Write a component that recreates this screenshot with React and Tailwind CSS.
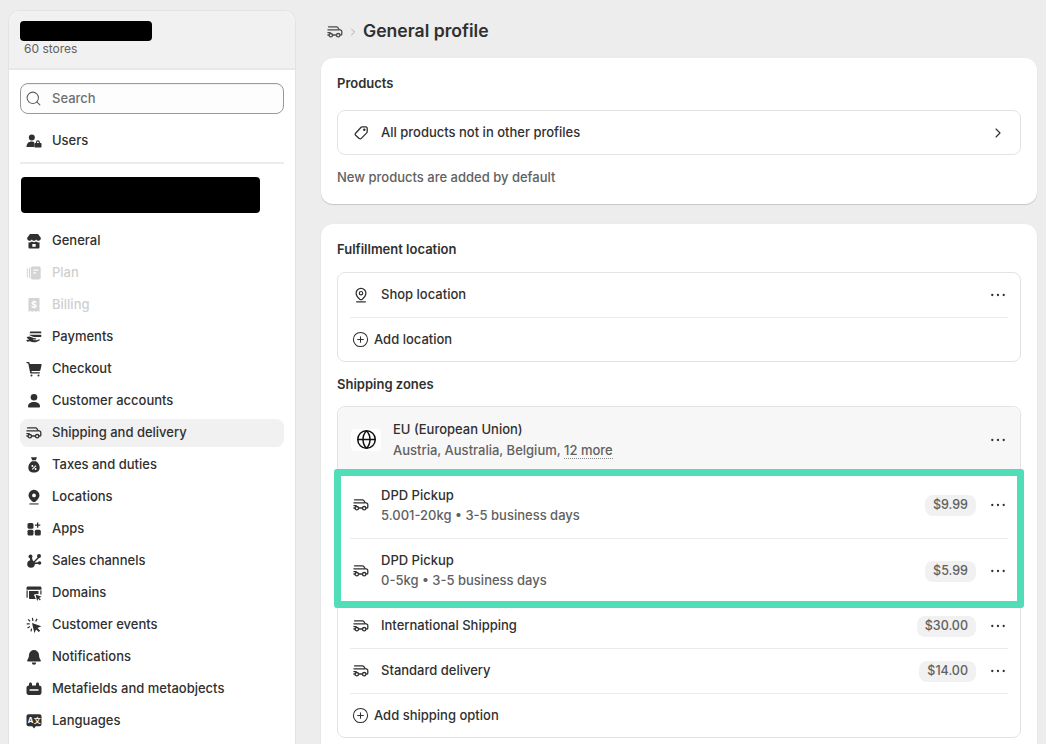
import React from "react";
import { ChevronRight, CirclePlus, Globe, Search } from "lucide-react";

const Truck = ({ className = "" }) => (
  <svg viewBox="0 0 16 16" width="16" height="16" fill="none" stroke="currentColor" strokeWidth="1.3" strokeLinecap="round" strokeLinejoin="round" className={className}>
    <path d="M1.5 2.800h8c.5 0 .9.200 1.200.6l1.400 2.100 1.700.6c.6.200 1 .7 1 1.300v2.800c0 .5-.3.800-.8.800h-.5" />
    <path d="M.9 5.800h11" />
    <path d="M.9 8.600h2.300M.9 11h.8M5.800 11h3" />
    <circle cx="3.800" cy="11.200" r="1.700" />
    <circle cx="11.200" cy="11.200" r="1.700" />
  </svg>
);

const Dots = ({ className = "" }) => (
  <svg viewBox="0 0 20 20" width="20" height="20" fill="#303030" className={`shrink-0 ${className}`}>
    <circle cx="4.300" cy="10" r="1.150" />
    <circle cx="10" cy="10" r="1.150" />
    <circle cx="15.700" cy="10" r="1.150" />
  </svg>
);

const Pin = () => (
  <svg viewBox="0 0 16 16" width="16" height="16" fill="none" stroke="#303030" strokeWidth="1.200" strokeLinecap="round" className="shrink-0">
    <path d="M8 1.300a4.900 4.900 0 0 1 4.900 4.900c0 2.300-1.600 4.200-3.600 6-.8.600-1.800.600-2.600 0-2-1.800-3.600-3.700-3.600-6A4.900 4.900 0 0 1 8 1.300Z" />
    <circle cx="8" cy="6.200" r="1.700" />
    <path d="M3.600 14.800h8.800" />
  </svg>
);

const TagIcon = () => (
  <svg viewBox="0 0 16 16" width="16" height="16" fill="none" stroke="#303030" strokeWidth="1.300" strokeLinejoin="round" className="shrink-0">
    <path d="M9.200 1.800h3.500c.8 0 1.500.7 1.500 1.500v3.500c0 .4-.2.800-.5 1.100l-5.400 5.500c-.6.600-1.500.6-2.100 0L2.600 10.300c-.6-.6-.6-1.500 0-2.100L8.100 2.300c.3-.3.700-.5 1.100-.5Z" />
    <circle cx="11.300" cy="4.700" r=".6" fill="#303030" />
  </svg>
);

const Fill = ({ children, color }) => (
  <svg viewBox="0 0 16 16" width="16" height="16" fill={color} className="shrink-0">{children}</svg>
);

const icons = {
  users: (c) => (
    <Fill color={c}>
      <circle cx="5.800" cy="4.600" r="3" />
      <path d="M.5 14c0-3.200 2-5.400 5.300-5.400 1 0 1.900.2 2.600.6-.3.500-.4 1-.4 1.600V14Z" />
      <path fillRule="evenodd" d="M9 10h.9V9.300a2 2 0 0 1 4 0V10h.9c.3 0 .7.300.7.700v3c0 .4-.4.700-.7.700H9c-.3 0-.7-.3-.7-.7v-3c0-.4.400-.7.700-.7Zm2-.1h1.800v-.6a.9.900 0 0 0-1.800 0Z" />
    </Fill>
  ),
  general: (c) => (
    <Fill color={c}>
      <path d="M4 1h8l2.800 3.800c.3 1.700-.9 3-2.300 3-1 0-1.800-.5-2.300-1.300-.5.800-1.300 1.300-2.200 1.300s-1.700-.5-2.200-1.300c-.5.800-1.300 1.300-2.300 1.300-1.400 0-2.600-1.300-2.300-3Z" />
      <path fillRule="evenodd" d="M2.500 9.200c1.200.4 2.500.2 3.500-.6 1.200.8 2.800.8 4 0 1 .8 2.300 1 3.500.6v5.300c0 .6-.5 1-1 1h-9c-.5 0-1-.4-1-1Zm3.800 1.800v2.800h3.400V11Z" />
    </Fill>
  ),
  plan: (c) => (
    <Fill color={c}>
      <path d="M.8 3.500h1v9h-1zM3 3h1v10H3z" />
      <path fillRule="evenodd" d="M6.500 1.500h6.500c1 0 1.700.7 1.700 1.700v9.600c0 1-.7 1.700-1.700 1.700H6.500c-1 0-1.700-.7-1.700-1.700V3.200c0-1 .7-1.700 1.700-1.700Zm.8 3v1.300h5V4.500Zm0 2.700v1.200h2.800V7.200Z" />
    </Fill>
  ),
  billing: (c) => (
    <Fill color={c}>
      <path d="M3.500 1h9c.6 0 1 .4 1 1v13l-2-1.300-1.700 1.300L8 13.700 6.200 15l-1.700-1.300-2 1.300V2c0-.6.400-1 1-1Z" />
      <text x="8" y="10.500" fontSize="9" fontWeight="700" textAnchor="middle" fill="#fff" fontFamily="Inter, sans-serif">$</text>
    </Fill>
  ),
  payments: (c) => (
    <Fill color={c}>
      <path d="M4.500 2.500h10.300c.3 0 .5.200.5.500v1.300H3.700L4 3c.1-.3.200-.5.500-.5ZM3 5.700h12.300v1.900c0 .3-.2.500-.5.500H9.500c-1.800 0-3-.5-4.200-1.100C4.500 6.600 3.800 6.200 3 5.700Z" />
      <path d="M.6 8.300c1.800-1.300 3.400-.8 5 0 1 .5 2.300.9 4 1 .8 0 .8 1.200 0 1.200H7v.6l3.200.1 3.200-1 .5 1.100-3.600 1.700c-2 .7-4.600.3-6.500-.7l-2.600.5-1-1.800 3-.6c-.9-.3-1.800-.9-2.600-2.100Z" />
    </Fill>
  ),
  checkout: (c) => (
    <Fill color={c}>
      <path d="M.5 1h2.200c.4 0 .8.300.9.700L3.800 3h11c.5 0 .9.500.8 1l-1.200 5.200c-.1.500-.5.800-1 .8H5.500l.2 1.200h8.100v1.300H5c-.4 0-.7-.3-.8-.6L2.200 2.300H.5Z" />
      <circle cx="5.500" cy="14.500" r="1" />
      <circle cx="12.500" cy="14.500" r="1" />
    </Fill>
  ),
  customer: (c) => (
    <Fill color={c}>
      <circle cx="8" cy="4.300" r="3.300" />
      <path d="M2 13.500c0-2.800 2.300-4.500 6-4.500s6 1.700 6 4.500c0 .6-.4 1-1 1H3c-.6 0-1-.4-1-1Z" />
    </Fill>
  ),
  taxes: (c) => (
    <Fill color={c}>
      <path d="M5 .3h6L9.800 3.300H6.200Z" />
      <path fillRule="evenodd" d="M6 4.300h4c2.300 1.600 3.700 3.800 3.700 6.200 0 3-2 5-5.700 5s-5.700-2-5.700-5c0-2.400 1.400-4.600 3.700-6.200Zm3.700 3.900L5.800 12l.8.800 3.900-3.800ZM6.400 8a1 1 0 1 0 0 2 1 1 0 0 0 0-2Zm3.200 3a1 1 0 1 0 0 2 1 1 0 0 0 0-2Z" />
    </Fill>
  ),
  locations: (c) => (
    <Fill color={c}>
      <path fillRule="evenodd" d="M8 .8a5.500 5.500 0 0 1 5.500 5.500c0 2.400-1.700 4.400-3.800 6.200-1 .8-2.400.8-3.400 0C4.200 10.700 2.500 8.700 2.500 6.300A5.500 5.500 0 0 1 8 .8Zm0 3.700a1.900 1.900 0 1 0 0 3.800 1.900 1.900 0 0 0 0-3.800Z" />
      <path d="M3.500 14.400h9v1.100h-9z" />
    </Fill>
  ),
  apps: (c) => (
    <Fill color={c}>
      <rect x="1.500" y="2" width="6" height="5.700" rx="1.500" />
      <rect x="1.500" y="8.800" width="6" height="5.700" rx="1.500" />
      <rect x="8.800" y="8.800" width="6" height="5.700" rx="1.500" />
      <path d="M11 1.500h1.300v2h2v1.300h-2v2H11v-2H9V3.500h2Z" />
    </Fill>
  ),
  channels: (c) => (
    <Fill color={c}>
      <circle cx="4.500" cy="3.500" r="2" />
      <circle cx="13" cy="3" r="2" />
      <circle cx="13.500" cy="10" r="1.800" />
      <circle cx="5" cy="11" r="3.800" />
      <path d="M4 4h1.700l1.500 5H4ZM12.500 3.500l1 1-5 5-1-1ZM8 9.500l5-.3v1.500l-5 .5Z" />
    </Fill>
  ),
  domains: (c) => (
    <Fill color={c}>
      <path d="M.5 3c0-.9.700-1.500 1.500-1.500h12c.8 0 1.500.600 1.500 1.500v1.800H.5Z" />
      <path d="M.5 5.500h1.200v7.300H.5zM14.300 5.500h1.200v4h-1.200z" />
      <path d="M3 6h9.500v3H9l-1 1 1.800 4H3.800c-.4 0-.8-.4-.8-.8Z" />
      <path d="M9.500 9.500l6 2.300-2.400 1.100 1.700 1.700-.9.900-1.700-1.700-1 2.300Z" />
    </Fill>
  ),
  events: (c) => (
    <Fill color={c}>
      <path d="M6 6l9.300 3.300-3.800 1.700 2.700 2.700-1.400 1.400-2.700-2.700-1.700 3.700Z" />
      <path d="M5.800 1l1.200-.2.500 3-1.200.2ZM1.700 2.800l.9-.9 2 2-.9.9ZM10.600 1.600l1 .6-1.500 2.500-1-.6ZM.7 6.300h3v1.200h-3ZM1.200 10.500l2.400-1.400.6 1-2.400 1.400ZM5 11.500l1.200.3-.6 2.800-1.200-.3Z" />
    </Fill>
  ),
  bell: (c) => (
    <Fill color={c}>
      <path d="M8 1a5 5 0 0 1 5 4.800c.1 2.500.6 4 1.700 5.300.4.500.1 1.400-.7 1.400H2c-.8 0-1.100-.9-.7-1.400C2.400 9.800 2.900 8.300 3 5.800A5 5 0 0 1 8 1Z" />
      <path d="M5.800 13.500h4.400a2.200 2.200 0 0 1-4.400 0Z" />
    </Fill>
  ),
  meta: (c) => (
    <Fill color={c}>
      <path fillRule="evenodd" d="M4.500 1.500c.8 0 1.500.7 1.500 1.500v1.500h4V3c0-.8.700-1.500 1.500-1.500S13 2.200 13 3v1.500h.3c1.200 0 2.200 1 2.200 2.200v5.100c0 1.200-1 2.200-2.200 2.200H2.700c-1.200 0-2.200-1-2.200-2.200V6.700c0-1.200 1-2.200 2.200-2.200H3V3c0-.8.700-1.500 1.500-1.500ZM3.500 8.300v1.400h9V8.300Z" />
    </Fill>
  ),
  lang: (c) => (
    <Fill color={c}>
      <path d="M2.500 1.200h11c1.100 0 2 .9 2 2v8c0 1.100-.9 2-2 2H9.800L8 15.500 6.200 13.200H2.500c-1.100 0-2-.9-2-2v-8c0-1.100.9-2 2-2Z" />
      <text x="4.600" y="9.800" fontSize="7.500" fontWeight="700" textAnchor="middle" fill="#fff" fontFamily="Inter, sans-serif">A</text>
      <text x="11.200" y="9.800" fontSize="7" fontWeight="700" textAnchor="middle" fill="#fff" fontFamily="Noto Sans CJK SC, sans-serif">文</text>
    </Fill>
  ),
};

const nav = [
  ["general", "General"],
  ["plan", "Plan", true],
  ["billing", "Billing", true],
  ["payments", "Payments"],
  ["checkout", "Checkout"],
  ["customer", "Customer accounts"],
  ["truck", "Shipping and delivery", false, true],
  ["taxes", "Taxes and duties"],
  ["locations", "Locations"],
  ["apps", "Apps"],
  ["channels", "Sales channels"],
  ["domains", "Domains"],
  ["events", "Customer events"],
  ["bell", "Notifications"],
  ["meta", "Metafields and metaobjects"],
  ["lang", "Languages"],
];

const NavRow = ({ icon, label, disabled, active }) => {
  const color = disabled ? "#d4d4d4" : "#303030";
  return (
    <div className={`flex h-7 items-center gap-[10px] rounded-lg pl-[6px] ${active ? "bg-[#f1f1f1]" : ""}`}>
      {icon === "truck" ? <Truck className="shrink-0 text-[#303030]" /> : icons[icon](color)}
      <span className={`text-[13px] font-[450] ${disabled ? "text-[#cfcfcf]" : "text-[#303030]"}`}>{label}</span>
    </div>
  );
};

const Price = ({ children }) => (
  <span className="mt-[1px] flex h-[21px] items-center rounded-lg bg-[#f1f1f1] px-2 text-[12.500px] font-[450] text-[#616161]">{children}</span>
);

const ShipRow = ({ title, sub, price, h, last, textClass = "" }) => (
  <div className={`mx-[12px] flex items-center pl-[3px] ${h} ${last ? "" : "shadow-[0_1px_0_#ebebeb]"}`}>
    <Truck className="shrink-0 text-[#303030]" />
    <div className={`ml-[12px] flex min-w-0 flex-1 flex-col gap-[2px] ${textClass}`}>
      <span className="text-[13px] leading-[18px] font-[450] text-[#303030]">{title}</span>
      {sub && <span className="text-[13px] leading-[18px] font-[450] text-[#616161]">{sub}</span>}
    </div>
    <Price>{price}</Price>
    <span className="ml-3"><Dots /></span>
  </div>
);

export default function App() {
  return (
    <div className="flex h-screen gap-[25px] overflow-hidden bg-[#ededed] pt-[10px] pl-2 font-['Inter',sans-serif] antialiased">
      <aside className="w-[288px] shrink-0 rounded-t-xl border border-b-0 border-[#e3e3e3] bg-white">
        <div className="h-[59px] rounded-t-xl border-b-2 border-[#e8e8e8] bg-[#f1f1f1] pt-[10px] pl-[11px]">
          <div className="h-5 w-[132px] rounded bg-black" />
          <div className="pl-1 text-[12px] leading-[16px] text-[#616161]">60 stores</div>
        </div>
        <div className="px-[11px] pt-[13px]">
          <div className="flex h-[31px] items-center gap-2 rounded-lg border border-[#9a9a9a] bg-[#fdfdfd] pl-1 shadow-[inset_0_1px_1px_rgba(0,0,0,0.05)]">
            <Search size={17} strokeWidth={1.500} className="text-[#616161]" />
            <span className="ml-[2px] text-[13px] font-[450] text-[#707070]">Search</span>
          </div>
          <div className="mt-[13px]">
            <NavRow icon="users" label="Users" />
          </div>
          <div className="mt-[7px] h-[2px] bg-[#ededed]" />
          <div className="mt-[13px] ml-[1px] h-[36px] w-[239px] rounded bg-black" />
          <div className="mt-[14px] flex flex-col gap-1">
            {nav.map(([icon, label, disabled, active]) => (
              <NavRow key={label} icon={icon} label={label} disabled={disabled} active={active} />
            ))}
          </div>
        </div>
      </aside>

      <main className="flex w-[716px] shrink-0 flex-col">
        <div className="flex h-[42px] shrink-0 items-center pt-[1px] pl-[6px] text-[#303030]">
          <Truck className="text-[#4a4a4a]" />
          <ChevronRight size={12} strokeWidth={1.300} className="ml-[4px] text-[#8a8a8a]" />
          <h1 className="ml-[4px] text-[17.600px] font-semibold text-[#303030]">General profile</h1>
        </div>

        <section className="mt-[6px] h-[146px] shrink-0 rounded-xl bg-white p-4 shadow-[0_1px_1px_rgba(0,0,0,0.16),0_0_1px_rgba(0,0,0,0.08)]">
          <h2 className="text-[13px] leading-[18px] font-semibold text-[#303030]">Products</h2>
          <div className="mt-[18px] flex h-[45px] items-center rounded-lg border border-[#e3e3e3] pr-[14px] pl-[15px]">
            <TagIcon />
            <span className="ml-[12px] flex-1 text-[13px] font-[450] text-[#303030]">All products not in other profiles</span>
            <ChevronRight size={16} strokeWidth={1.700} className="text-[#303030]" />
          </div>
          <p className="mt-[13px] text-[13px] leading-[18px] font-[450] text-[#616161]">New products are added by default</p>
        </section>

        <section className="mt-[20px] flex-1 rounded-xl bg-white p-4 shadow-[0_1px_1px_rgba(0,0,0,0.16),0_0_1px_rgba(0,0,0,0.08)]">
          <h2 className="text-[13px] leading-[18px] font-semibold text-[#303030]">Fulfillment location</h2>
          <div className="mt-[14px] rounded-lg border border-[#e3e3e3]">
            <div className="mx-[12px] flex h-[45px] items-center border-b border-[#ebebeb] pl-[3px]">
              <Pin />
              <span className="ml-[12px] flex-1 text-[13px] font-[450] text-[#303030]">Shop location</span>
              <Dots />
            </div>
            <div className="mx-[14px] flex h-[43px] items-center gap-[5px] text-[13px] font-medium text-[#303030]">
              <CirclePlus size={17} strokeWidth={1.500} />
              Add location
            </div>
          </div>

          <h2 className="mt-[13px] text-[13px] leading-[18px] font-semibold text-[#303030]">Shipping zones</h2>
          <div className="relative mt-[13px] rounded-lg border border-[#e3e3e3]">
            <div className="flex h-[65px] items-center rounded-t-lg bg-[#f7f7f7] pr-[12px] pl-[13px]">
              <span className="flex h-[22px] w-[30px] shrink-0 items-center justify-center rounded bg-white">
                <Globe size={21} strokeWidth={1.700} className="text-[#111111]" />
              </span>
              <div className="ml-3 flex flex-1 flex-col gap-[3px]">
                <span className="text-[13px] leading-[18px] font-medium text-[#303030]">EU (European Union)</span>
                <span className="text-[13px] leading-[18px] font-[450] text-[#616161]">
                  Austria, Australia, Belgium, <span className="border-b border-dotted border-[#8a8a8a]">12 more</span>
                </span>
              </div>
              <Dots className="mt-[1px]" />
            </div>
            <ShipRow title="DPD Pickup" sub="5.001-20kg • 3-5 business days" price="$9.99" h="h-[66px]" />
            <ShipRow title="DPD Pickup" sub="0-5kg • 3-5 business days" price="$5.99" h="h-[65px]" textClass="pb-[1px]" last />
            <ShipRow title="International Shipping" price="$30.00" h="h-[45px]" textClass="pb-[1px]" />
            <ShipRow title="Standard delivery" price="$14.00" h="h-[45px]" textClass="pb-[1px]" />
            <div className="mx-[14px] flex h-[44px] items-center gap-[5px] pt-[1px] text-[13px] font-medium text-[#303030]">
              <CirclePlus size={17} strokeWidth={1.500} />
              Add shipping option
            </div>
            <div className="pointer-events-none absolute top-[62px] -right-[4px] -left-[4px] h-[139px] rounded-[3px] border-[7px] border-[#52ddb9]" />
          </div>
        </section>
      </main>
    </div>
  );
}
